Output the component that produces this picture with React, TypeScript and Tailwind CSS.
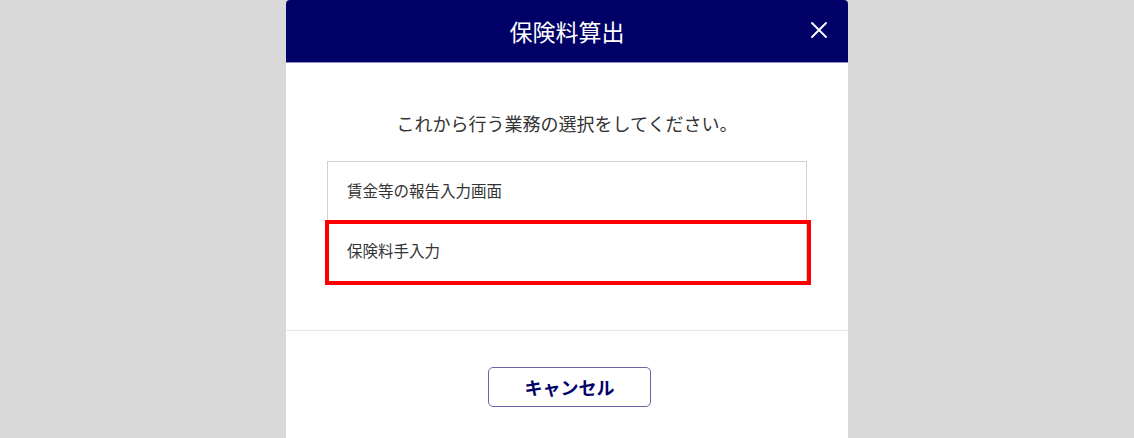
import { X } from "lucide-react";

const font = { fontFamily: '"Noto Sans CJK JP", "Noto Sans", sans-serif' };

const items = [
  { label: "賃金等の報告入力画面", highlighted: false },
  { label: "保険料手入力", highlighted: true },
];

export default function App() {
  return (
    <div
      className="flex h-[438px] justify-center overflow-hidden bg-[#d9d9d9]"
      style={font}
    >
      <div className="h-[480px] w-[562px] self-start rounded-t-[4px] bg-white">
        {/* Header */}
        <div className="relative flex h-[63px] items-center justify-center rounded-t-[4px] border-b border-[#8a8ad0] bg-[#000066]">
          <h1 className="text-[23px] leading-none text-white">保険料算出</h1>
          <button
            type="button"
            className="absolute right-[15px] top-[16px] text-white"
            aria-label="閉じる"
          >
            <X size={28} strokeWidth={1.6} />
          </button>
        </div>

        {/* Body */}
        <div className="px-[41px] pb-[48px] pt-[47px]">
          <p className="text-center text-[18px] leading-[27px] text-[#333]">
            これから行う業務の選択をしてください。
          </p>
          <ul className="mt-[24px] border border-[#d0d0d0]">
            {items.map((item, i) => (
              <li
                key={item.label}
                className={`relative flex items-center px-[19px] text-[15.5px] text-[#333] ${
                  i === 0 ? "h-[59px] border-b border-[#d0d0d0]" : "h-[60px]"
                }`}
              >
                {item.label}
                {item.highlighted && (
                  <span className="pointer-events-none absolute -left-[3px] -top-[1px] h-[65px] w-[486px] border-4 border-[#ff0000]" />
                )}
              </li>
            ))}
          </ul>
        </div>

        {/* Footer */}
        <div className="flex justify-center border-t border-[#e6e6e6] pt-[36px]">
          <button
            type="button"
            className="ml-[5px] h-[40px] w-[163px] rounded-[5px] border border-[#6666a6] text-[18px] font-bold text-[#000066]"
          >
            キャンセル
          </button>
        </div>
      </div>
    </div>
  );
}
